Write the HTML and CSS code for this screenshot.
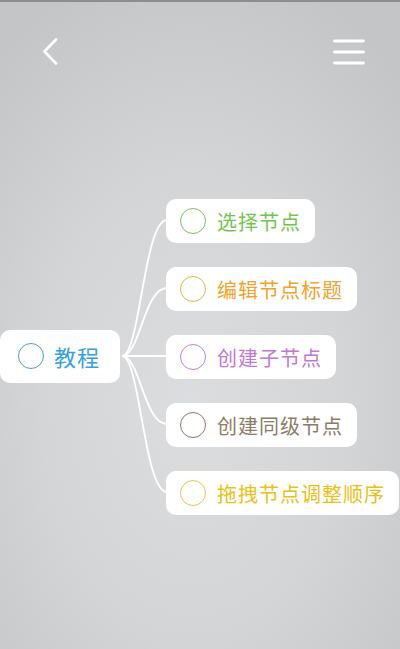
FILE: index.html
```html
<!DOCTYPE html>
<html lang="zh-CN">
<head>
<meta charset="utf-8">
<title>教程</title>
<link rel="stylesheet" href="styles.css">
</head>
<body>
<div class="page">
  <header class="topbar">
    <svg class="icon-back" width="16" height="27" viewBox="0 0 16 27">
      <path d="M14 1.5 L2.5 13.5 L14 25.5" fill="none" stroke="#fff" stroke-width="2.6" stroke-linecap="round" stroke-linejoin="round"/>
    </svg>
    <svg class="icon-menu" width="32" height="26" viewBox="0 0 32 26">
      <path d="M1.5 2 H30.5 M1.5 13 H30.5 M1.5 24 H30.5" fill="none" stroke="#fff" stroke-width="2.8" stroke-linecap="round"/>
    </svg>
  </header>
  <main class="map">
    <svg class="links" width="400" height="420" viewBox="0 0 400 420">
      <g fill="none" stroke="#fff" stroke-width="1.8">
        <path d="M122 256 C140 256 144 120 167 120"/>
        <path d="M122 256 C140 256 144 188 167 188"/>
        <path d="M122 256 L167 256"/>
        <path d="M122 256 C140 256 144 324 167 324"/>
        <path d="M122 256 C140 256 144 392 167 392"/>
      </g>
    </svg>
    <div class="node root">
      <span class="ring ring-blue"></span>
      <span class="label">教程</span>
    </div>
    <div class="children">
      <div class="node child green"><span class="ring"></span><span class="label">选择节点</span></div>
      <div class="node child orange"><span class="ring"></span><span class="label">编辑节点标题</span></div>
      <div class="node child purple"><span class="ring"></span><span class="label">创建子节点</span></div>
      <div class="node child brown"><span class="ring"></span><span class="label">创建同级节点</span></div>
      <div class="node child yellow"><span class="ring"></span><span class="label">拖拽节点调整顺序</span></div>
    </div>
  </main>
</div>
</body>
</html>
```

FILE: styles.css
```css
* { box-sizing: border-box; }
html, body { margin: 0; padding: 0; }
body {
  width: 400px;
  height: 649px;
  overflow: hidden;
  font-family: "Noto Sans CJK SC", "Noto Sans", sans-serif;
}
.page {
  width: 400px;
  height: 649px;
  border-top: 2px solid #8d8d8f;
  background: radial-gradient(ellipse 75% 70% at 48% 62%, #dcdddf 0%, #d4d5d7 50%, #c4c5c7 100%);
  overflow: hidden;
}
.topbar {
  height: 98px;
  display: flex;
  align-items: center;
  justify-content: space-between;
  padding: 0 35px 0 42px;
}
.icon-back { display: block; }
.icon-menu { display: block; margin-top: 2px; }
.map {
  position: relative;
  display: flex;
  align-items: center;
  gap: 46px;
  padding-top: 99px;
}
.links {
  position: absolute;
  left: 0;
  top: 0;
  pointer-events: none;
}
.node {
  position: relative;
  z-index: 1;
  display: flex;
  align-items: center;
  background: #fff;
  border-radius: 10px;
  white-space: nowrap;
}
.root {
  height: 53px;
  padding: 0 20px 0 18px;
  margin-top: -2px;
}
.root .label {
  font-size: 22px;
  letter-spacing: 1px;
  color: #36a2d8;
}
.ring {
  width: 26px;
  height: 26px;
  border-radius: 50%;
  border: 1.3px solid currentColor;
  margin-right: 11px;
  flex: none;
}
.ring-blue { color: #4c9fca; margin-right: 10px; }
.children {
  display: flex;
  flex-direction: column;
  align-items: flex-start;
  gap: 24px;
}
.child {
  height: 44px;
  padding: 0 14px 0 14px;
}
.child .label {
  font-size: 20px;
  letter-spacing: 1px;
}
.green { color: #72c64f; }
.orange { color: #f0a32e; }
.purple { color: #c278d4; }
.brown { color: #8d7b68; }
.yellow { color: #e8c11a; }
.green .ring { color: #7cc060; }
.orange .ring { color: #efae45; }
.purple .ring { color: #c47ed6; }
.brown .ring { color: #8b7a6a; }
.yellow .ring { color: #e8c64a; }
```
